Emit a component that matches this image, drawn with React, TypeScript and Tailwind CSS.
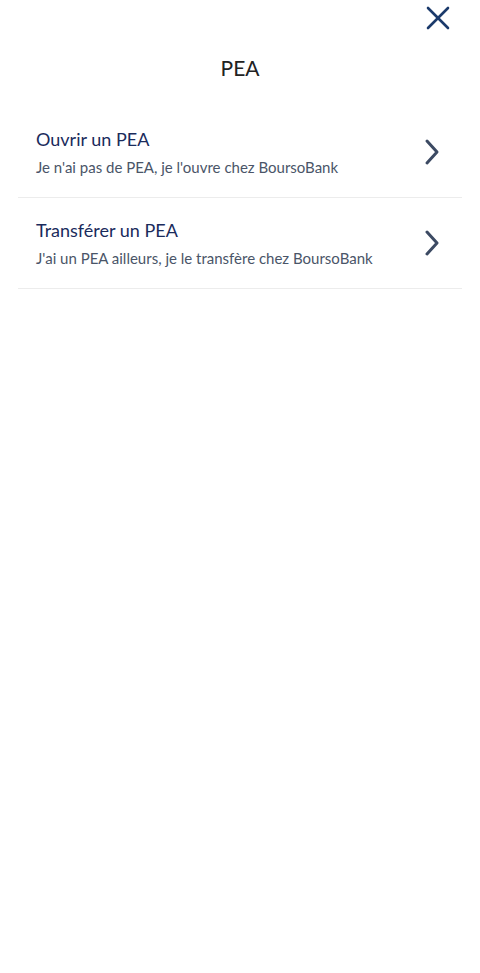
const options = [
  {
    title: "Ouvrir un PEA",
    subtitle: "Je n'ai pas de PEA, je l'ouvre chez BoursoBank",
  },
  {
    title: "Transférer un PEA",
    subtitle: "J'ai un PEA ailleurs, je le transfère chez BoursoBank",
  },
];

const App = () => {
  return (
    <div className="w-[480px] h-[973px] bg-white flex flex-col font-['Lato',sans-serif]">
      <div className="flex justify-end pt-[4px] pr-[28px]">
        <button className="text-[#1b3a6b]">
          <svg width="28" height="28" viewBox="0 0 28 28" fill="none" stroke="currentColor" strokeWidth="2.6" strokeLinecap="round">
            <path d="M4 4 L24 24" />
            <path d="M24 4 L4 24" />
          </svg>
        </button>
      </div>
      <p className="text-center text-[21px] text-[#222] mt-[22px] leading-[28px]">PEA</p>
      <div className="flex flex-col mt-[25px] px-[18px]">
        {options.map((option, index) => (
          <a key={index} className="flex items-center justify-between border-b border-[#ececec] pl-[18px] pr-[22px] h-[91px] cursor-pointer">
            <div className="flex flex-col">
              <p className="text-[18px] text-[#1a2b5c] leading-[24px]">{option.title}</p>
              <p className="text-[15px] text-[#4a5568] leading-[20px] mt-[6px]">{option.subtitle}</p>
            </div>
            <svg className="text-[#3c4a63]" width="16" height="28" viewBox="0 0 16 28" fill="none" stroke="currentColor" strokeWidth="3" strokeLinecap="round" strokeLinejoin="round">
              <path d="M3 3 L13 14 L3 25" />
            </svg>
          </a>
        ))}
      </div>
    </div>
  );
};

export default App;
